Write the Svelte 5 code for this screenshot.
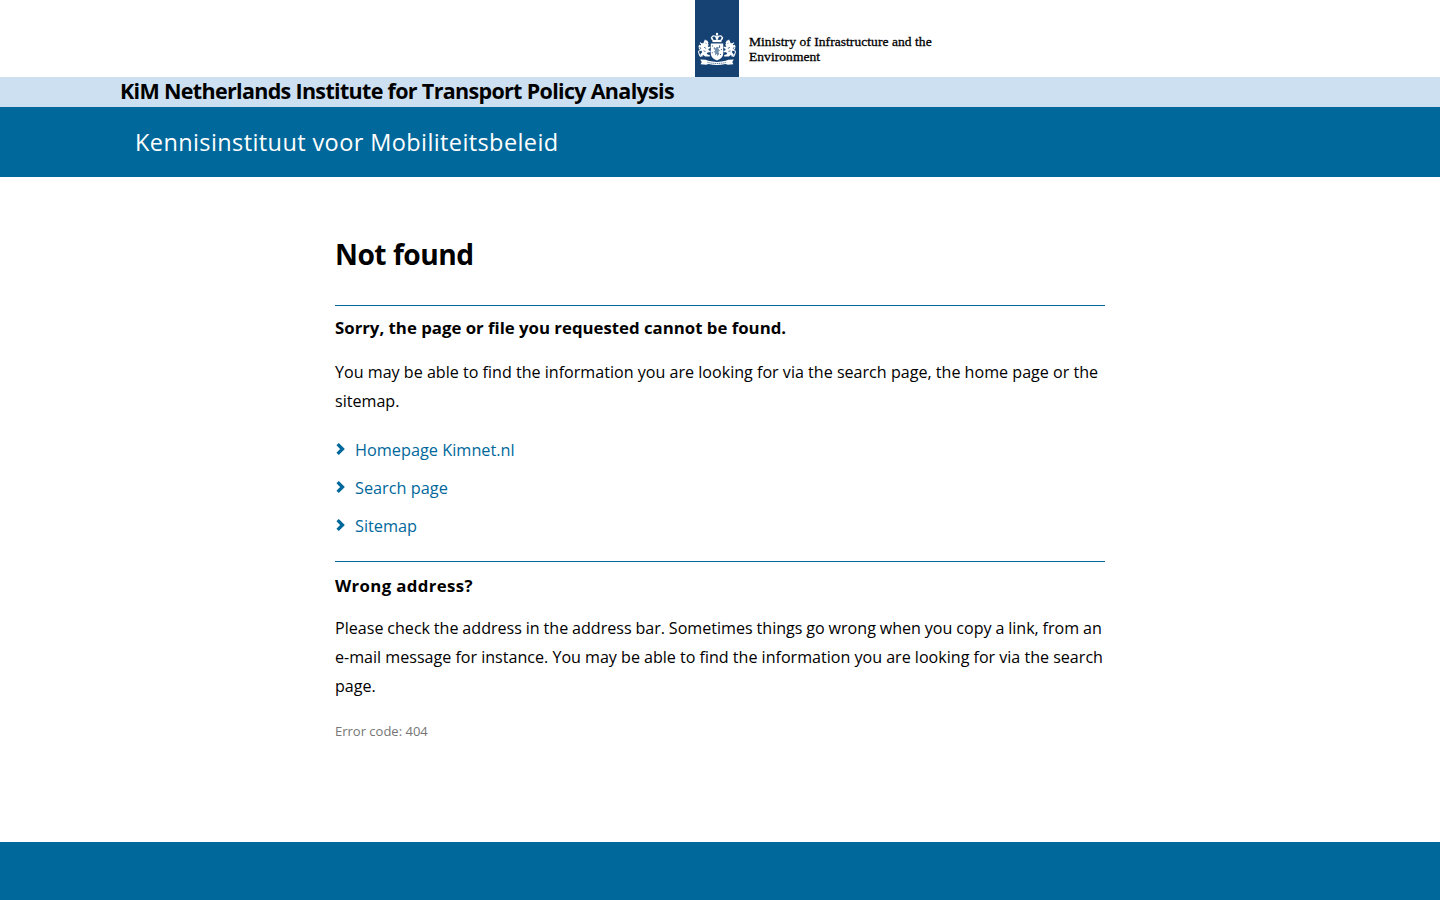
<script>
  const links = ['Homepage Kimnet.nl', 'Search page', 'Sitemap'];
</script>

{#snippet lion()}
  <path d="M7.6 14.2l1.8-4 .6 1 1.6.2 1.3 2.2-.4 1.3.8 1.2-1.2 1.3 1.2.9 1.6-.6v1.5l-2 1 .4 1.8 1.8.2v1.5l-2.8 0-1.2 1.5 1.8 1.2 1.5.2v1.5H9.5l-2-1.6-.9.8.4.9H4.8l-.4-2.1 2-2.4-.5-1.5-2.2.2-.5-1.4 2.3-.9-.6-1.4-1.9.4-.7-1.5 2.8-1.2.3-1.5-1.1-.6z" />
  <path d="M5.2 28.2c-2.2-.6-1.3-2.3-2.2-3.6-.6-1-.2-2 .3-2.6M3 19.6l1.6.4M4.2 13.6l2 2M3 16.5l2 .6" fill="none" stroke="#fff" stroke-width="1.1" />
  <path d="M8.5 18.6l2 1.1M7.8 22.2l2.1.7M10 14.2l.9.5" fill="none" stroke="#154273" stroke-width=".8" />
{/snippet}

<header class="top">
  <div class="mark">
    <svg viewBox="0 0 44 42" width="44" height="42" fill="#fff" aria-hidden="true">
      <g transform="translate(1 1.5) scale(.96)">{@render lion()}</g>
      <g transform="translate(43 1.5) scale(-.96 .96)">{@render lion()}</g>
      <path d="M15.8 15.5h12.4v10c0 3.4-2.5 5.3-6.2 7-3.7-1.7-6.2-3.6-6.2-7z" />
      <path d="M18.3 20l1.5-1 .6 1.6 1.6-1.8 2 .7-.8 1.5 1.8 1.5-1.7 1.2.9 2.1-1.6 2.4-.8-2.1-2 1.3.5-2.6-1.9-.7 1.9-1.4z" fill="#154273" opacity=".6" />
      <path d="M24.6 17.3v2.6M26.4 21v1M17.3 24.3v1M25.5 26v1M17.5 17.5v1" stroke="#154273" stroke-width=".8" />
      <circle cx="22" cy="5.9" r="1.2" />
      <g fill="none" stroke="#fff" stroke-width="1.2">
        <path d="M22 6.5v5M18.2 12.2c-2.6-2.3-1.3-4.6.9-4.4 1.5.1 2.4 1.4 2.5 4M25.8 12.2c2.6-2.3 1.3-4.6-.9-4.4-1.5.1-2.4 1.4-2.5 4" />
        <path d="M17.5 13h9" stroke-width="2.2" />
        <path d="M16.2 9.3l1.3 2.5M27.8 9.3l-1.3 2.5" />
      </g>
      <path d="M5.2 31.6l5.6.2 2.4 1c5.8 1.5 11.8 1.5 17.6 0l2.4-1 5.6-.2-1.5 2.3 1.1 2.3-5.5.5-2.5-.8c-5.5 1.5-11.3 1.5-16.8 0l-2.5.8-5.5-.5 1.1-2.3z" />
      <path d="M12.5 34.4c6.3 1.4 12.7 1.4 19 0" fill="none" stroke="#154273" stroke-width=".7" stroke-dasharray="1.2 .7" />
    </svg>
  </div>
  <div class="ministry">Ministry of Infrastructure and the<br />Environment</div>
</header>
<div class="institute">KiM Netherlands Institute for Transport Policy Analysis</div>
<div class="title">Kennisinstituut voor Mobiliteitsbeleid</div>

<main>
  <h1>Not found</h1>
  <section class="first">
    <h2>Sorry, the page or file you requested cannot be found.</h2>
    <p>
      <span class="line">You may be able to find the information you are looking for via the search page, the home page or the</span>
      <span class="line">sitemap.</span>
    </p>
    <ul>
      {#each links as link}
        <li>
          <svg viewBox="0 0 10 14" width="10" height="14" aria-hidden="true"><path d="M2.6 2.1l4.9 4.9-4.9 4.9" /></svg>
          <a href="#top">{link}</a>
        </li>
      {/each}
    </ul>
  </section>
  <section class="second">
    <h2 class="wide">Wrong address?</h2>
    <p>
      <span class="line b">Please check the address in the address bar. Sometimes things go wrong when you copy a link, from an</span>
      <span class="line c">e-mail message for instance. You may be able to find the information you are looking for via the search</span>
      <span class="line">page.</span>
    </p>
    <p class="code">Error code: 404</p>
  </section>
</main>
<footer></footer>

<style>
  :global(body) { margin: 0; background: #fff; }
  :global(#app) {
    min-height: 900px;
    display: flex;
    flex-direction: column;
    color: #000;
    font-family: 'Open Sans', 'Noto Sans', sans-serif;
    font-size: 16.1px;
  }
  .top { height: 77px; display: flex; margin-left: 695px; }
  .mark { width: 44px; height: 77px; box-sizing: border-box; padding-top: 28px; background: #154273; flex: none; }
  .mark svg { display: block; }
  .ministry {
    margin: 34px 0 0 10px;
    font: 13.5px/15px 'Liberation Serif', serif;
    letter-spacing: 0.06px;
    -webkit-text-stroke: 0.3px #000;
    white-space: nowrap;
  }
  .institute {
    height: 30px;
    padding-left: 120px;
    background: #cce0f1;
    font-size: 21.5px;
    font-weight: 700;
    line-height: 27px;
    letter-spacing: -0.68px;
    white-space: nowrap;
  }
  .title {
    height: 70px;
    padding-left: 135px;
    background: #01689b;
    color: #fff;
    font-size: 23.5px;
    line-height: 70px;
    letter-spacing: 0.4px;
  }
  main { width: 770px; margin: 0 auto; padding-top: 57px; flex: 1; }
  h1 { margin: 0; font-size: 28.2px; line-height: 40px; font-weight: 700; letter-spacing: -0.5px; }
  h2 { margin: 0; font-size: 16.8px; line-height: 29px; font-weight: 700; white-space: nowrap; }
  .wide { letter-spacing: 0.36px; }
  section { border-top: 1px solid #01689b; }
  .first { margin-top: 31px; padding-top: 7px; }
  .second { margin-top: 16px; padding-top: 9px; }
  p { margin: 16px 0 0; line-height: 29px; }
  .second p { margin-top: 14px; }
  .line { display: block; white-space: nowrap; }
  .b { word-spacing: -0.35px; }
  .c { word-spacing: -0.08px; }
  ul { list-style: none; margin: 15px 0 0; padding: 0; }
  li { display: flex; align-items: center; height: 38px; gap: 10px; line-height: 38px; }
  li svg { flex: none; margin-top: -2px; fill: none; stroke: #01689b; stroke-width: 3.3; }
  a { color: #01689b; text-decoration: none; font-size: 16.3px; }
  .second .code { margin-top: 20px; color: #767676; font-size: 13px; line-height: 20px; }
  footer { height: 58px; background: #01689b; }
</style>
